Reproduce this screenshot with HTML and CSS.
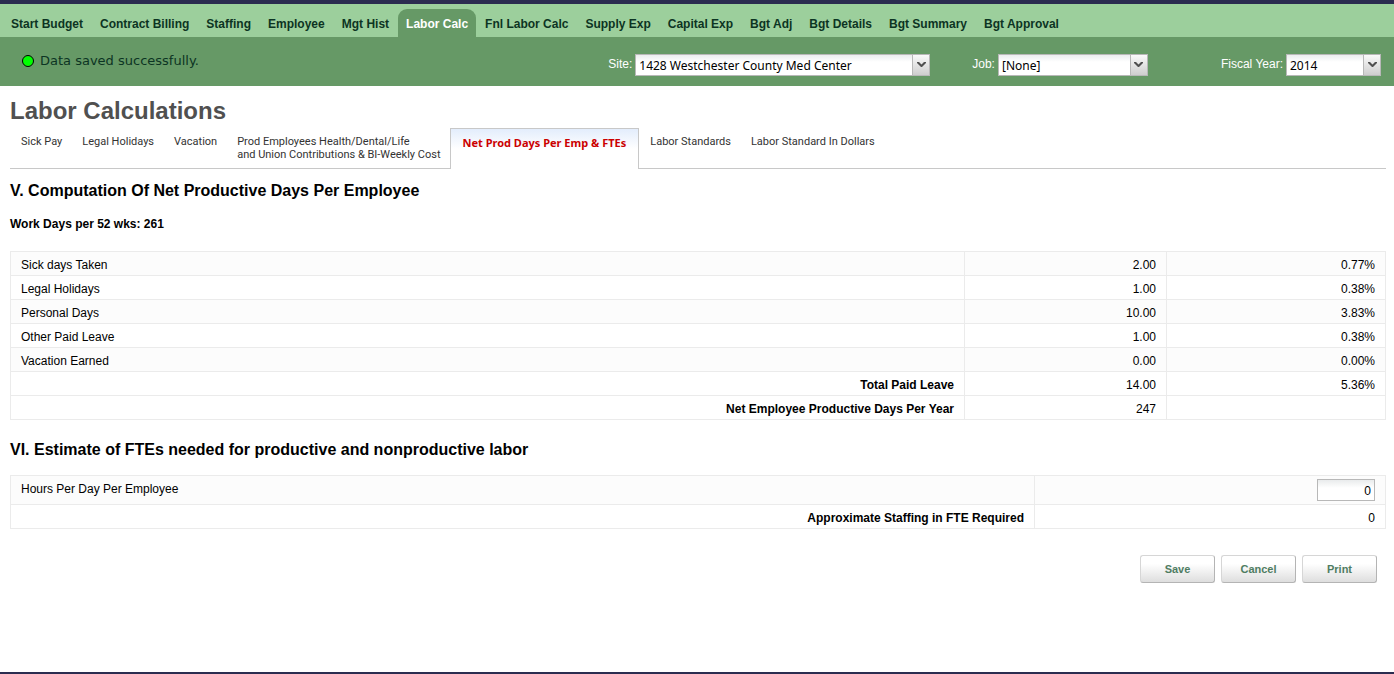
FILE: index.html
```html
<!DOCTYPE html>
<html lang="en">
<head>
<meta charset="utf-8">
<title>Labor Calculations</title>
<link rel="stylesheet" href="styles.css">
</head>
<body>
<div class="page">
  <header>
    <nav class="main-nav">
      <a href="#">Start Budget</a>
      <a href="#">Contract Billing</a>
      <a href="#">Staffing</a>
      <a href="#">Employee</a>
      <a href="#">Mgt Hist</a>
      <a href="#" class="active" aria-current="page">Labor Calc</a>
      <a href="#">Fnl Labor Calc</a>
      <a href="#">Supply Exp</a>
      <a href="#">Capital Exp</a>
      <a href="#">Bgt Adj</a>
      <a href="#">Bgt Details</a>
      <a href="#">Bgt Summary</a>
      <a href="#">Bgt Approval</a>
    </nav>
    <div class="filter-bar">
      <p class="status"><span class="status-dot"></span>Data saved successfully.</p>
      <form class="filters">
        <div class="filter">
          <label for="site">Site:</label>
          <span class="combo combo-site"><select id="site"><option>1428 Westchester County Med Center</option></select><span class="combo-arrow"><svg viewBox="0 0 9 5" width="9" height="5"><path d="M0 0H2L4.500 2.500L7 0H9V1L5 5H4L0 1Z"/></svg></span></span>
        </div>
        <div class="filter filter-job">
          <label for="job">Job:</label>
          <span class="combo combo-job"><select id="job"><option>[None]</option></select><span class="combo-arrow"><svg viewBox="0 0 9 5" width="9" height="5"><path d="M0 0H2L4.500 2.500L7 0H9V1L5 5H4L0 1Z"/></svg></span></span>
        </div>
        <div class="filter filter-year">
          <label for="year">Fiscal Year:</label>
          <span class="combo combo-year"><select id="year"><option>2014</option></select><span class="combo-arrow"><svg viewBox="0 0 9 5" width="9" height="5"><path d="M0 0H2L4.500 2.500L7 0H9V1L5 5H4L0 1Z"/></svg></span></span>
        </div>
      </form>
    </div>
  </header>
  <main>
    <h1>Labor Calculations</h1>
    <nav class="sub-nav">
      <a href="#">Sick Pay</a>
      <a href="#">Legal Holidays</a>
      <a href="#">Vacation</a>
      <a href="#">Prod Employees Health/Dental/Life<br>and Union Contributions &amp; BI-Weekly Cost</a>
      <a href="#" class="active" aria-current="page">Net Prod Days Per Emp &amp; FTEs</a>
      <a href="#">Labor Standards</a>
      <a href="#">Labor Standard In Dollars</a>
    </nav>
    <h2>V. Computation Of Net Productive Days Per Employee</h2>
    <p class="work-days">Work Days per 52 wks: 261</p>
    <table class="days">
      <colgroup><col><col class="col-days"><col class="col-percent"></colgroup>
      <tbody>
        <tr class="shaded"><td>Sick days Taken</td><td class="num">2.00</td><td class="num">0.77%</td></tr>
        <tr><td>Legal Holidays</td><td class="num">1.00</td><td class="num">0.38%</td></tr>
        <tr class="shaded"><td>Personal Days</td><td class="num">10.00</td><td class="num">3.83%</td></tr>
        <tr><td>Other Paid Leave</td><td class="num">1.00</td><td class="num">0.38%</td></tr>
        <tr class="shaded"><td>Vacation Earned</td><td class="num">0.00</td><td class="num">0.00%</td></tr>
        <tr><th scope="row">Total Paid Leave</th><td class="num">14.00</td><td class="num">5.36%</td></tr>
        <tr><th scope="row">Net Employee Productive Days Per Year</th><td class="num">247</td><td></td></tr>
      </tbody>
    </table>
    <h2>VI. Estimate of FTEs needed for productive and nonproductive labor</h2>
    <table class="fte">
      <colgroup><col><col class="col-fte"></colgroup>
      <tbody>
        <tr class="shaded"><td><label for="hours">Hours Per Day Per Employee</label></td><td class="num field"><input id="hours" type="text" value="0"></td></tr>
        <tr><th scope="row">Approximate Staffing in FTE Required</th><td class="num">0</td></tr>
      </tbody>
    </table>
    <div class="actions">
      <button type="button">Save</button>
      <button type="button">Cancel</button>
      <button type="button">Print</button>
    </div>
  </main>
</div>
</body>
</html>
```
FILE: styles.css
```css
* { box-sizing: border-box; }

body {
  margin: 0;
  background: #fff;
  color: #000;
  font: 12px/15px "Liberation Sans", Arial, sans-serif;
}

a { text-decoration: none; }

.page {
  min-height: 100vh;
  border-top: 4px solid #2b2c50;
  border-bottom: 2px solid #2b2c50;
}

.main-nav {
  display: flex;
  align-items: flex-end;
  gap: 1px;
  height: 33px;
  padding-left: 3px;
  background: #9ccf9c;
}

.main-nav a {
  height: 28px;
  padding: 8px 8px 0;
  border-radius: 9px 9px 0 0;
  color: #0c3423;
  font-weight: bold;
  white-space: nowrap;
}

.main-nav a.active {
  background: #669966;
  color: #fff;
}

.filter-bar {
  display: flex;
  justify-content: space-between;
  height: 49px;
  padding: 16px 13px 0 22px;
  background: #669966;
}

.status {
  display: flex;
  align-items: center;
  gap: 6px;
  height: 15px;
  margin: 0;
  color: #0c3423;
  font: 13px/15px "DejaVu Sans", Verdana, sans-serif;
}

.status-dot {
  width: 12px;
  height: 12px;
  border: 1px solid #000;
  border-radius: 50%;
  background: #00ff00;
}

.filters { display: flex; }

.filter {
  display: flex;
  gap: 3px;
  height: 24px;
  color: #fff;
}

.filter label { padding-top: 4px; }
.filter-job { margin-left: 42px; }
.filter-year { margin-left: 73px; }

.combo {
  position: relative;
  height: 22px;
  margin-top: 1px;
}

.combo-site { width: 295px; }
.combo-job { width: 150px; }
.combo-year { width: 95px; }

.combo select {
  appearance: none;
  width: 100%;
  height: 22px;
  padding: 1px 20px 0 3px;
  border: 1px solid #b8b8b8;
  border-radius: 0;
  background: linear-gradient(#ebedee, #fff 7px);
  color: #000;
  font: 12px/18px "Noto Sans", Tahoma, sans-serif;
}

.combo-arrow {
  position: absolute;
  top: 1px;
  right: 1px;
  display: flex;
  align-items: center;
  justify-content: center;
  width: 17px;
  height: 20px;
  padding-bottom: 2px;
  border-left: 1px solid #b8b8b8;
  background: linear-gradient(#fafafa, #cecece);
  pointer-events: none;
}

.combo-arrow svg { fill: #505050; }

main { padding: 12px 8px 0 10px; }

h1 {
  margin: 0;
  color: #505050;
  font-size: 24px;
  line-height: 26px;
}

.sub-nav {
  display: flex;
  height: 45px;
  padding-top: 4px;
  border-bottom: 1px solid #c8c8c8;
  font: 11px/13px Roboto, Tahoma, sans-serif;
}

.sub-nav a {
  height: 41px;
  padding: 7px 9px 0 11px;
  color: #333;
  white-space: nowrap;
}

.sub-nav a.active {
  padding: 7px 12px 0;
  border: 1px solid #c8c8c8;
  border-bottom: 0;
  background: linear-gradient(#e3edfc, #fff 20px);
  color: #c00;
  font-family: "Noto Sans", Tahoma, sans-serif;
  font-weight: bold;
}

h2 {
  margin: 12px 0 17px;
  font-size: 16px;
  line-height: 19px;
}

.work-days {
  margin: 0 0 19px;
  font-weight: bold;
}

table {
  width: 100%;
  border-collapse: collapse;
  table-layout: fixed;
}

td, th {
  height: 24px;
  padding: 6px 10px 2px;
  border: 1px solid #ebebeb;
  text-align: left;
  vertical-align: top;
}

th, .num { text-align: right; }
.shaded { background: #fcfcfc; }
.col-days { width: 202px; }
.col-percent { width: 219px; }
.col-fte { width: 351px; }
.days + h2 { margin: 20px 0 16px; }

.field {
  height: 29px;
  padding-top: 3px;
  padding-bottom: 3px;
}

.field input {
  display: block;
  width: 58px;
  height: 22px;
  margin-left: auto;
  padding: 2px 3px 0;
  border: 1px solid #b8b8b8;
  background: linear-gradient(#e9ebec, #fff 8px);
  font: 12px/18px "Liberation Sans", Arial, sans-serif;
  text-align: right;
}

.actions {
  display: flex;
  justify-content: flex-end;
  gap: 6px;
  padding: 26px 9px;
}

button {
  width: 75px;
  height: 28px;
  padding: 0;
  border: 1px solid #d6d6d6;
  border-right-color: #b4b4b4;
  border-bottom-color: #b4b4b4;
  border-radius: 3px;
  background: linear-gradient(#fff 30%, #dedede);
  color: #4f7d62;
  font: bold 11px/14px "Liberation Sans", Arial, sans-serif;
}
```
